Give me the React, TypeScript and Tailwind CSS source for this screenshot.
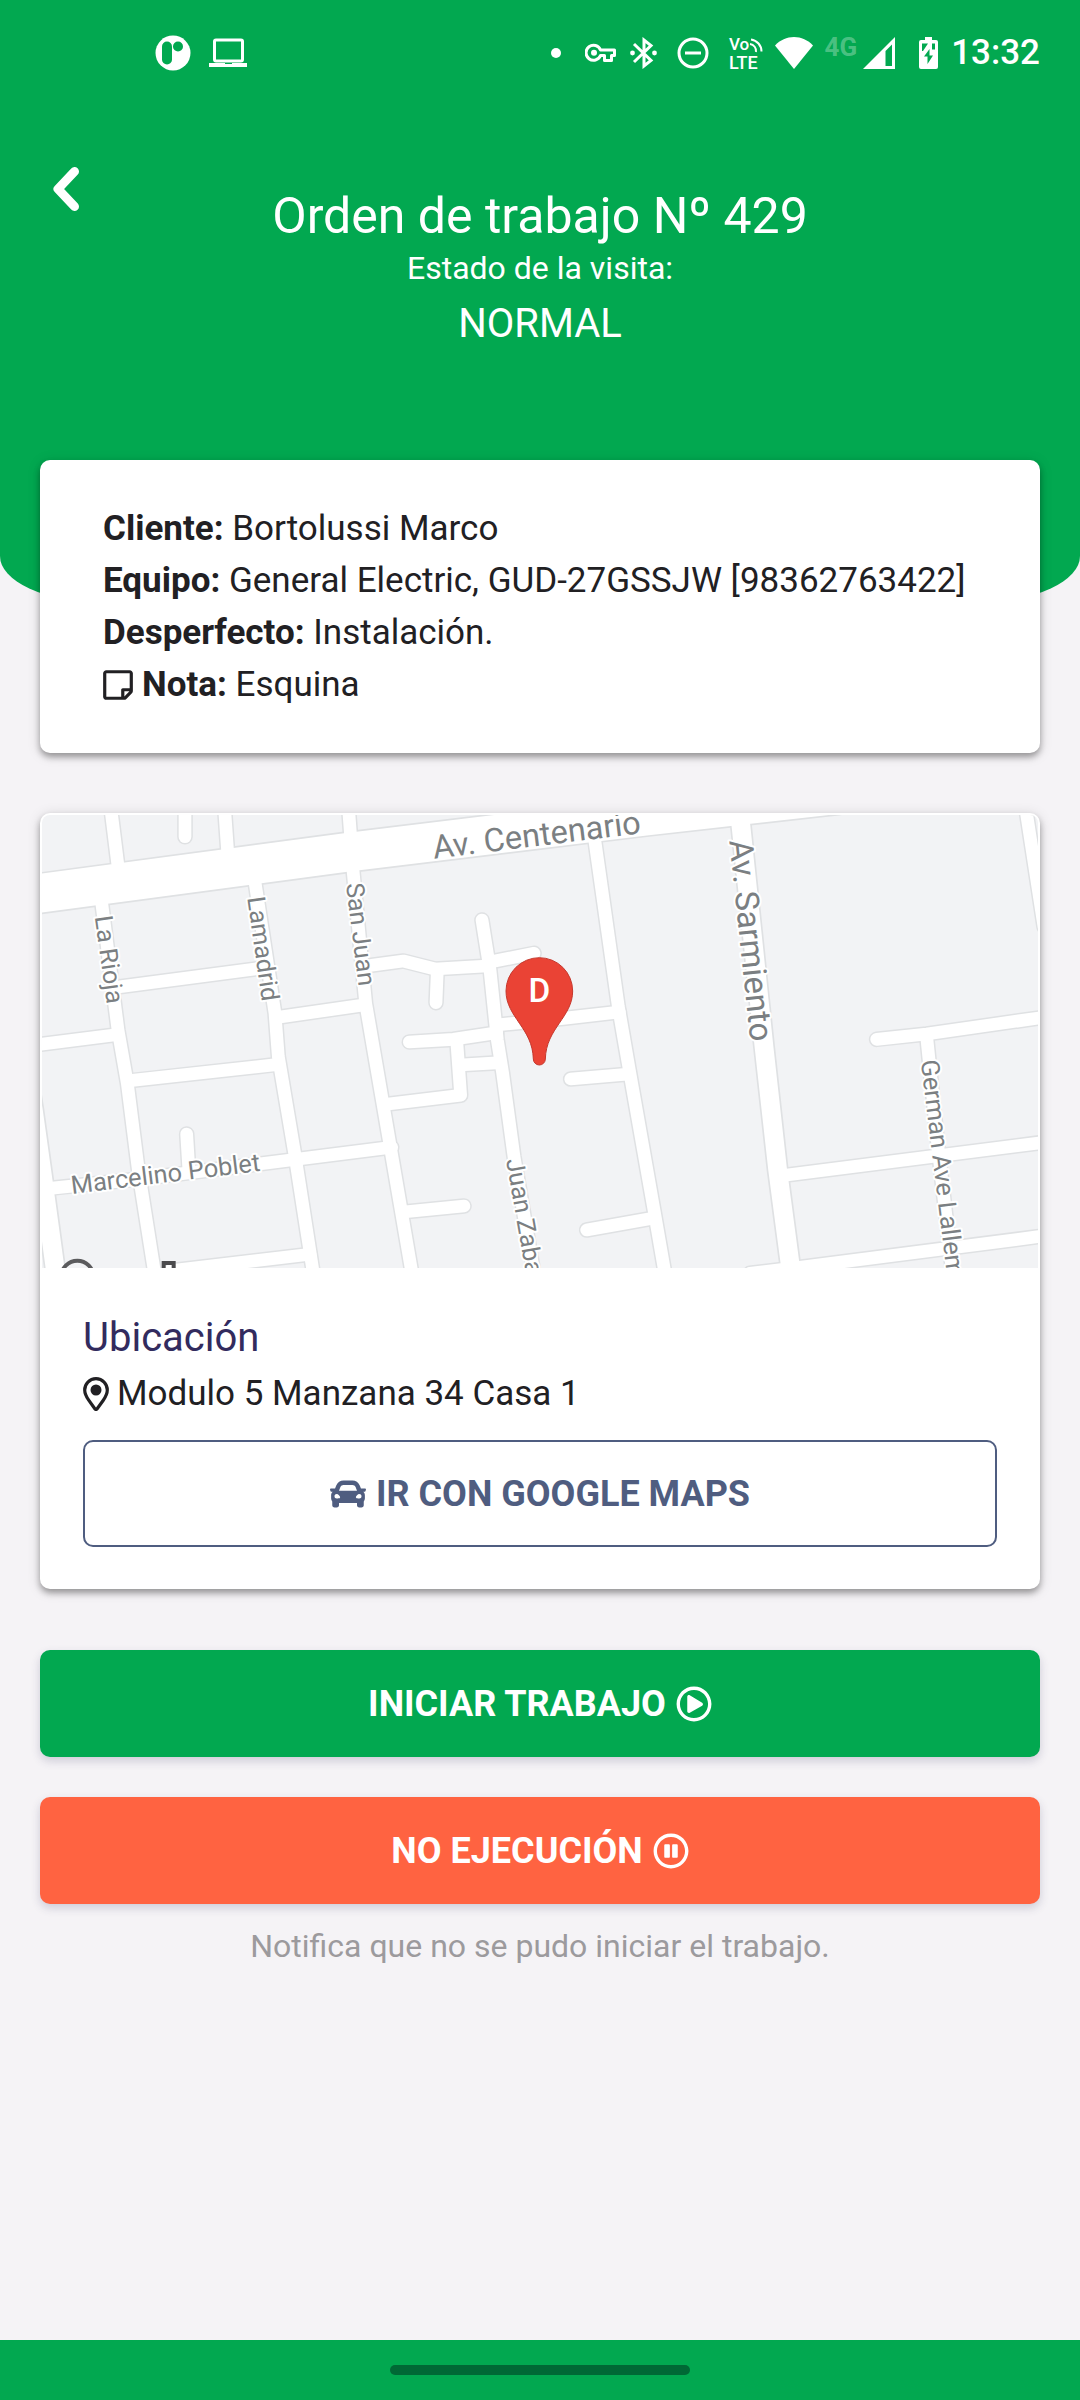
import type { ReactNode } from "react";
import { FaCar, FaRegPauseCircle, FaRegPlayCircle, FaRegStickyNote } from "react-icons/fa";

function AppBadgeIcon() {
  return (
    <svg viewBox="0 0 36 36" className="size-9" fill="none" aria-hidden="true">
      <circle cx="18" cy="18" r="17.500" fill="#fff" />
      <rect x="7" y="6.500" width="10" height="23" rx="5" fill="#02a850" />
      <circle cx="23" cy="11.500" r="5" fill="#02a850" />
    </svg>
  );
}

function LaptopIcon() {
  return (
    <svg viewBox="0 0 38 30" className="h-[30px] w-[38px]" fill="none" aria-hidden="true">
      <rect x="5.500" y="2" width="28" height="21" rx="1.500" stroke="#fff" strokeWidth="3" />
      <path d="M0 25h16v1h7v-1h15v4H0z" fill="#fff" />
    </svg>
  );
}

function KeyIcon() {
  return (
    <svg viewBox="0 0 31 20" className="h-5 w-[31px]" fill="none" stroke="#fff" strokeWidth="3" aria-hidden="true">
      <path d="M15.500 7H29.500V12.500H26.500V17.500H19.500V12.500H15.500A7.500 7.500 0 1 1 15.500 7Z" strokeLinejoin="round" />
      <circle cx="9" cy="9.800" r="3" fill="#fff" stroke="none" />
    </svg>
  );
}

function BluetoothIcon() {
  return (
    <svg viewBox="0 0 27 32" className="h-8 w-[27px]" fill="none" stroke="#fff" strokeWidth="3" aria-hidden="true">
      <path d="M4 7 21 23.500 14 29V3L21 8.500 4 25" />
      <circle cx="2.500" cy="16" r="2.400" fill="#fff" stroke="none" />
      <circle cx="24.500" cy="16" r="2.400" fill="#fff" stroke="none" />
    </svg>
  );
}

function DoNotDisturbIcon() {
  return (
    <svg viewBox="0 0 32 32" className="size-8" fill="none" stroke="#fff" strokeWidth="3" aria-hidden="true">
      <circle cx="16" cy="16" r="14" />
      <path d="M8 16h16" />
    </svg>
  );
}

function VolteIcon() {
  return (
    <svg viewBox="0 0 34 32" className="h-8 w-[34px] overflow-visible" role="img" aria-label="VoLTE">
      <text x="0" y="13" fill="#fff" fontSize="17" fontWeight="500">Vo</text>
      <text x="0" y="32" fill="#fff" fontSize="18" fontWeight="500">LTE</text>
      <path d="M21 7a7 7 0 0 1 6 8M22 2.500a12 12 0 0 1 10.500 12" fill="none" stroke="#fff" strokeWidth="2" />
    </svg>
  );
}

function WifiIcon() {
  return (
    <svg viewBox="0 0 38 32" className="h-8 w-[38px]" fill="#fff" aria-hidden="true">
      <path d="M19 32 0 8.500C5 3 12 0 19 0s14 3 19 8.500z" />
    </svg>
  );
}

function SignalIcon() {
  return (
    <svg viewBox="0 0 32 32" className="size-8" aria-hidden="true">
      <path d="M0 32 32 0v32z" fill="#fff" />
      <path d="M22.500 14 29 7.500V29h-6.500z" fill="#02a850" />
    </svg>
  );
}

function BatteryIcon() {
  return (
    <svg viewBox="0 0 19 32" className="h-8 w-[19px]" aria-hidden="true">
      <path d="M6 0h7v3h4a2 2 0 0 1 2 2v25a2 2 0 0 1-2 2H2a2 2 0 0 1-2-2V5a2 2 0 0 1 2-2h4z" fill="#fff" />
      <path d="M10.500 12 5 19.500h3.500V27L14 18.500h-3.500zM3 6.500h6L4 14H3zM13 6.500h3v6h-3z" fill="#02a850" />
    </svg>
  );
}

function StatusBar() {
  return (
    <div className="flex h-[105px] items-center pr-10 pl-[155px] text-white">
      <AppBadgeIcon />
      <span className="ml-[18px]"><LaptopIcon /></span>
      <div className="ml-auto flex items-center">
        <span className="size-[10px] rounded-full bg-white" />
        <span className="ml-6"><KeyIcon /></span>
        <span className="ml-[14px]"><BluetoothIcon /></span>
        <span className="ml-5"><DoNotDisturbIcon /></span>
        <span className="ml-5"><VolteIcon /></span>
        <span className="ml-3"><WifiIcon /></span>
        <span className="ml-3 pb-3 text-[26px] leading-none font-bold text-white/30">4G</span>
        <span className="ml-[6px]"><SignalIcon /></span>
        <span className="ml-6"><BatteryIcon /></span>
        <time className="ml-[13px] text-[35px] leading-none font-medium">13:32</time>
      </div>
    </div>
  );
}

const MINOR_ROADS = [
  "M243 30 263 190",
  "M214 300 264 690 292 850 325 1110 374 1420",
  "M465 30V110",
  "M584 30 594 170",
  "M674 240 735 640 745 770 794 1060 850 1420",
  "M956 30 962 110",
  "M968 200 1007 610 1062 930 1146 1420",
  "M30 733 258 704",
  "M270 560 690 505",
  "M745 652 1005 614",
  "M300 842 745 793",
  "M60 1165 320 1138 800 1078 1085 1042",
  "M470 1002 476 1100",
  "M420 1412 840 1363",
  "M1120 1236 1302 1218",
  "M1025 496 1120 483 1215 507 1370 498",
  "M1380 486 1512 460",
  "M1222 510 1218 608",
  "M1356 360 1380 510 1402 720 1418 820 1452 1070 1512 1420",
  "M1138 726 1270 718 1400 698",
  "M1400 675 1600 655 1768 636",
  "M1280 720 1292 886 1075 912",
  "M1290 795 1412 788",
  "M1690 90 1765 620 1798 810 1872 1230 1905 1420",
  "M1622 837 1798 822",
  "M1670 1290 1872 1254",
  "M2540 718 2690 702 3040 652",
  "M2690 710 2725 1050 2768 1420",
  "M2265 1126 3040 1027",
  "M2160 1420 2310 1402 3040 1308",
  "M2988 30 3042 380",
];

const MAJOR_ROADS = [
  "M2130 50 2202 740 2243 1110 2284 1420",
  "M-24 720 10 930 42 1160 80 1440",
];

const AVENUE = "M0 284 950 157 1850 48 2420 -16";

const STREETS = [
  { name: "Av. Centenario", x: 1212, y: 176, angle: -7, size: 98 },
  { name: "Av. Sarmiento", x: 2098, y: 122, angle: 84, size: 99 },
  { name: "La Rioja", x: 194, y: 350, angle: 82, size: 75 },
  { name: "Lamadrid", x: 652, y: 293, angle: 82, size: 75 },
  { name: "San Juan", x: 948, y: 252, angle: 83, size: 75 },
  { name: "Marcelino Poblet", x: 126, y: 1182, angle: -7, size: 76 },
  { name: "Juan Zaba", x: 1428, y: 1080, angle: 80, size: 75 },
  { name: "German Ave Lallem", x: 2672, y: 782, angle: 83, size: 76 },
];

function StreetMap() {
  return (
    <svg
      viewBox="36 45 2988 1359"
      className="block w-full rounded-t-lg bg-[#f2f3f5]"
      role="img"
      aria-label="Mapa de la ubicación"
    >
      <g fill="none" stroke="#dfe1e3" strokeLinecap="round" strokeLinejoin="round">
        <path d={AVENUE} strokeWidth="126" />
        {MAJOR_ROADS.map((d) => <path key={d} d={d} strokeWidth="66" />)}
        {MINOR_ROADS.map((d) => <path key={d} d={d} strokeWidth="47" />)}
      </g>
      <g fill="none" stroke="#fff" strokeLinecap="round" strokeLinejoin="round">
        <path d={AVENUE} strokeWidth="116" />
        {MAJOR_ROADS.map((d) => <path key={d} d={d} strokeWidth="56" />)}
        {MINOR_ROADS.map((d) => <path key={d} d={d} strokeWidth="38" />)}
      </g>
      <g fill="#7b7f82" stroke="#fff" strokeWidth="12" strokeLinejoin="round" paintOrder="stroke">
        {STREETS.map(({ name, x, y, angle, size }) => (
          <text key={name} fontSize={size} transform={`translate(${x} ${y}) rotate(${angle})`}>
            {name}
          </text>
        ))}
      </g>
      <circle cx="142" cy="1430" r="48" fill="none" stroke="#5b5b5d" strokeWidth="12" />
      <path d="M395 1383h42v24h-12v-12h-18v12h-12z" fill="#4b4b4d" />
      <path
        d="M1428 573a100 100 0 0 1 200 0c0 78-80 112-82 204a18 18 0 0 1-36 0c-2-92-82-126-82-204z"
        fill="#ea4335"
        stroke="#c5372c"
        strokeWidth="3"
      />
      <text x="1528" y="606" fill="#fff" fontSize="100" fontWeight="500" textAnchor="middle">D</text>
    </svg>
  );
}

function PinIcon() {
  return (
    <svg viewBox="0 0 26 34" className="h-[34px] w-[26px] shrink-0" aria-hidden="true">
      <path
        d="M13 1.700C6.500 1.700 1.700 6.800 1.700 13c0 4 1.300 6.300 4 10.200L12 32q1 1.200 2 0l6.300-8.800c2.700-3.900 4-6.200 4-10.200C24.300 6.800 19.500 1.700 13 1.700z"
        fill="none"
        stroke="currentColor"
        strokeWidth="3.200"
      />
      <circle cx="13" cy="13" r="5.500" fill="currentColor" />
    </svg>
  );
}

function Card({ children }: { children: ReactNode }) {
  return (
    <section className="rounded-[10px] bg-white shadow-[0_4px_6px_rgba(0,0,0,0.32),0_2px_14px_rgba(0,0,0,0.14)]">
      {children}
    </section>
  );
}

function Detail({ label, children }: { label: string; children: ReactNode }) {
  return (
    <div>
      <dt className="inline font-bold">{label}</dt> <dd className="inline">{children}</dd>
    </div>
  );
}

export default function App() {
  return (
    <div className="flex min-h-screen flex-col bg-[#f5f3f6] font-['Roboto',sans-serif] text-[#212023]">
      <header className="rounded-b-[100px_46px] bg-[#02a850] pb-[243px] text-white">
        <StatusBar />
        <div className="relative pt-[80px] text-center">
          <button type="button" aria-label="Volver" className="absolute top-[58px] left-[46px] p-1">
            <svg viewBox="0 0 32 44" className="h-11 w-8" fill="none" aria-hidden="true">
              <path d="M24.500 4.500 8 22 24.500 39.500" stroke="#fff" strokeWidth="9" strokeLinecap="round" strokeLinejoin="round" />
            </svg>
          </button>
          <h1 className="text-[50px] leading-[62px]">Orden de trabajo Nº 429</h1>
          <p className="text-[32px] leading-[42px]">Estado de la visita:</p>
          <p className="text-[40px] leading-[70px]">NORMAL</p>
        </div>
      </header>

      <main className="-mt-[142px] flex flex-col px-10">
        <Card>
          <dl className="px-[63px] pt-[43px] pb-[42px] text-[35px] leading-[52px]">
            <Detail label="Cliente:">Bortolussi Marco</Detail>
            <Detail label="Equipo:">General Electric, GUD-27GSSJW [98362763422]</Detail>
            <Detail label="Desperfecto:">Instalación.</Detail>
            <div className="flex items-center gap-[9px]">
              <FaRegStickyNote className="h-[34px] w-[30px]" aria-hidden="true" />
              <Detail label="Nota:">Esquina</Detail>
            </div>
          </dl>
        </Card>

        <div className="mt-[60px]">
          <Card>
            <div className="p-[2px]">
              <StreetMap />
            </div>
            <div className="px-[43px] pt-10 pb-[42px]">
              <h2 className="text-[40px] leading-[56px] text-[#322b5e]">Ubicación</h2>
              <p className="flex items-center gap-2 text-[35px] leading-[56px]">
                <PinIcon />
                Modulo 5 Manzana 34 Casa 1
              </p>
              <button
                type="button"
                className="mt-[18px] flex h-[107px] w-full items-center justify-center gap-[10px] rounded-[10px] border-2 border-[#4f5d80] text-[36px] font-bold text-[#4f5d80]"
              >
                <FaCar className="size-9" aria-hidden="true" />
                IR CON GOOGLE MAPS
              </button>
            </div>
          </Card>
        </div>

        <button
          type="button"
          className="mt-[61px] flex h-[107px] items-center justify-center gap-[10px] rounded-[10px] bg-[#02a850] text-[36px] font-bold text-white shadow-[0_4px_10px_rgba(50,50,93,0.2)]"
        >
          INICIAR TRABAJO
          <FaRegPlayCircle className="size-9" aria-hidden="true" />
        </button>
        <button
          type="button"
          className="mt-10 flex h-[107px] items-center justify-center gap-[10px] rounded-[10px] bg-[#ff6341] text-[36px] font-bold text-white shadow-[0_4px_10px_rgba(50,50,93,0.2)]"
        >
          NO EJECUCIÓN
          <FaRegPauseCircle className="size-9" aria-hidden="true" />
        </button>
        <p className="mt-5 text-center text-[32px] leading-[44px] text-[#9c9a9d]">
          Notifica que no se pudo iniciar el trabajo.
        </p>
      </main>

      <footer className="mt-auto flex h-[60px] items-center justify-center bg-[#02a850]">
        <span className="h-[10px] w-[300px] rounded-full bg-[#006835]" />
      </footer>
    </div>
  );
}
